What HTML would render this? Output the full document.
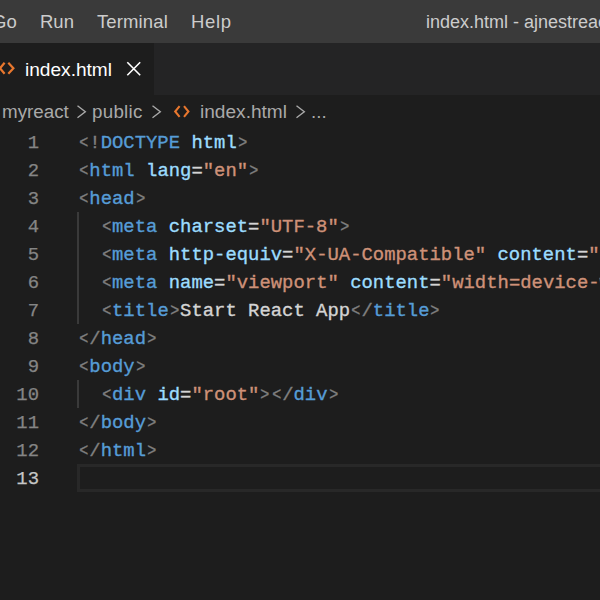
<!DOCTYPE html>
<html><head><meta charset="utf-8">
<style>
html,body{margin:0;padding:0;background:#1d1d1d;}
body{width:600px;height:600px;overflow:hidden;position:relative;font-family:"Liberation Sans",sans-serif;}
#title{position:absolute;left:0;top:0;width:600px;height:43px;background:#3a3a3a;color:#cccccc;font-size:18.5px;}
#title span{position:absolute;top:0;line-height:43px;white-space:nowrap;}
#tabs{position:absolute;left:0;top:43px;width:600px;height:52px;background:#242425;}
#tab{position:absolute;left:0;top:0;width:154px;height:52px;background:#1d1d1d;color:#ffffff;font-size:19.1px;}
#tab span{position:absolute;top:1px;line-height:52px;white-space:nowrap;}
#bc{position:absolute;left:0;top:95px;width:600px;height:33px;background:#1d1d1d;color:#a9a9a9;font-size:18.8px;}
#bc span{position:absolute;top:0.3px;line-height:33px;white-space:nowrap;}
#code{position:absolute;left:0;top:128px;width:600px;font-family:"Liberation Mono",monospace;font-size:18.9px;}
.l{position:relative;height:28px;line-height:28px;white-space:pre;}
.n{position:absolute;left:0;top:1px;-webkit-text-stroke:0.25px;width:39px;text-align:right;color:#858585;}
.c{position:absolute;left:78px;top:1px;-webkit-text-stroke:0.35px;color:#d4d4d4;}
.g{color:#808080}.g b{display:inline-block;font-weight:normal;transform:scaleX(0.8);}.t{color:#569cd6}.a{color:#9cdcfe}.s{color:#ce9178}
.ig{position:absolute;left:77px;top:0;width:2px;height:28px;background:#3a3a3a;}
.cur{position:absolute;left:77px;top:0;width:540px;height:28px;box-sizing:border-box;border:3px solid #282828;}
</style></head><body>
<div id="title"><span style="left:-8px">Go</span><span style="left:40px">Run</span><span style="left:97px;letter-spacing:0.12px">Terminal</span><span style="left:191px;letter-spacing:0.7px">Help</span><span style="left:426px;top:1px;font-size:18px">index.html - ajnestreact</span></div>
<div id="tabs"><div id="tab"><svg style="position:absolute;left:0;top:17px" width="16" height="16" viewBox="0 60 16 16"><path d="M4.6 62.8 L0 68.3 L4.6 73.8 M8.3 62.8 L13.4 68.3 L8.3 73.8" fill="none" stroke="#e8772e" stroke-width="2.2"/></svg><span style="left:25px">index.html</span><svg style="position:absolute;left:126px;top:18px" width="16" height="16" viewBox="0 0 16 16"><path d="M1.3 1.3 L14.2 14.2 M14.2 1.3 L1.3 14.2" fill="none" stroke="#ffffff" stroke-width="1.6"/></svg></div></div>
<div id="bc"><span style="left:2px">myreact</span><svg style="position:absolute;left:76px;top:10px" width="12" height="14" viewBox="0 0 12 14"><path d="M1.5 0.8 L9.3 6.8 L1.5 12.8" fill="none" stroke="#a9a9a9" stroke-width="1.4"/></svg><span style="left:92px;letter-spacing:0.25px">public</span><svg style="position:absolute;left:151px;top:10px" width="12" height="14" viewBox="0 0 12 14"><path d="M1.5 0.8 L9.3 6.8 L1.5 12.8" fill="none" stroke="#a9a9a9" stroke-width="1.4"/></svg><svg style="position:absolute;left:173px;top:10px" width="18" height="14" viewBox="0 0 18 14"><path d="M6.6 1.2 L2.2 6.5 L6.6 11.8 M11 1.2 L15.4 6.5 L11 11.8" fill="none" stroke="#e8772e" stroke-width="2.1"/></svg><span style="left:200px;font-size:19.1px">index.html</span><svg style="position:absolute;left:295px;top:10px" width="12" height="14" viewBox="0 0 12 14"><path d="M1.5 0.8 L9.3 6.8 L1.5 12.8" fill="none" stroke="#a9a9a9" stroke-width="1.4"/></svg><span style="left:311px">...</span></div>
<div id="code">
<div class="l"><span class="n">1</span><span class="c"><span class="g"><b>&lt;</b>!</span><span class="t">DOCTYPE</span> <span class="a">html</span><span class="g"><b>&gt;</b></span></span></div>
<div class="l"><span class="n">2</span><span class="c"><span class="g"><b>&lt;</b></span><span class="t">html</span> <span class="a">lang</span>=<span class="s">"en"</span><span class="g"><b>&gt;</b></span></span></div>
<div class="l"><span class="n">3</span><span class="c"><span class="g"><b>&lt;</b></span><span class="t">head</span><span class="g"><b>&gt;</b></span></span></div>
<div class="l"><i class="ig"></i><span class="n">4</span><span class="c">  <span class="g"><b>&lt;</b></span><span class="t">meta</span> <span class="a">charset</span>=<span class="s">"UTF-8"</span><span class="g"><b>&gt;</b></span></span></div>
<div class="l"><i class="ig"></i><span class="n">5</span><span class="c">  <span class="g"><b>&lt;</b></span><span class="t">meta</span> <span class="a">http-equiv</span>=<span class="s">"X-UA-Compatible"</span> <span class="a">content</span>=<span class="s">"IE=edge"</span><span class="g"><b>&gt;</b></span></span></div>
<div class="l"><i class="ig"></i><span class="n">6</span><span class="c">  <span class="g"><b>&lt;</b></span><span class="t">meta</span> <span class="a">name</span>=<span class="s">"viewport"</span> <span class="a">content</span>=<span class="s">"width=device-width, initial-scale=1.0"</span><span class="g"><b>&gt;</b></span></span></div>
<div class="l"><i class="ig"></i><span class="n">7</span><span class="c">  <span class="g"><b>&lt;</b></span><span class="t">title</span><span class="g"><b>&gt;</b></span>Start React App<span class="g"><b>&lt;</b>/</span><span class="t">title</span><span class="g"><b>&gt;</b></span></span></div>
<div class="l"><span class="n">8</span><span class="c"><span class="g"><b>&lt;</b>/</span><span class="t">head</span><span class="g"><b>&gt;</b></span></span></div>
<div class="l"><span class="n">9</span><span class="c"><span class="g"><b>&lt;</b></span><span class="t">body</span><span class="g"><b>&gt;</b></span></span></div>
<div class="l"><i class="ig"></i><span class="n">10</span><span class="c">  <span class="g"><b>&lt;</b></span><span class="t">div</span> <span class="a">id</span>=<span class="s">"root"</span><span class="g"><b>&gt;</b><b>&lt;</b>/</span><span class="t">div</span><span class="g"><b>&gt;</b></span></span></div>
<div class="l"><span class="n">11</span><span class="c"><span class="g"><b>&lt;</b>/</span><span class="t">body</span><span class="g"><b>&gt;</b></span></span></div>
<div class="l"><span class="n">12</span><span class="c"><span class="g"><b>&lt;</b>/</span><span class="t">html</span><span class="g"><b>&gt;</b></span></span></div>
<div class="l"><i class="cur"></i><span class="n" style="color:#c6c6c6">13</span></div>
</div>
</body></html>
